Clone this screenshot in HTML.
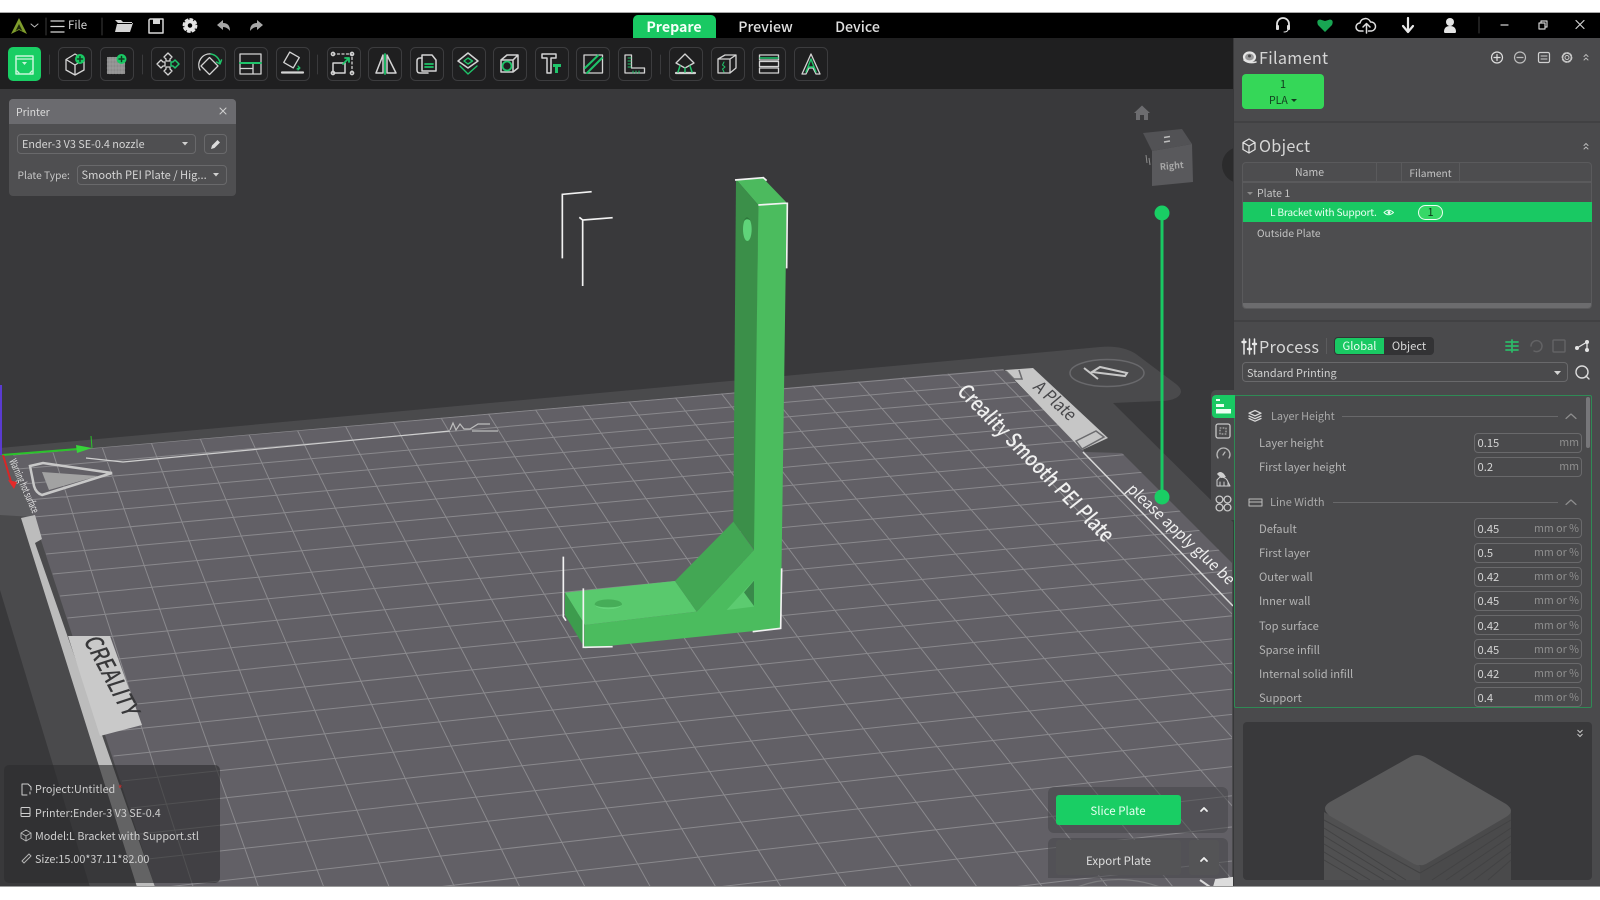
<!DOCTYPE html>
<html lang="en"><head><meta charset="utf-8"><title>Creality Print</title>
<style>
html,body{margin:0;padding:0;background:#fff;width:1600px;height:900px;overflow:hidden}
body{font-family:"Noto Sans CJK SC","Liberation Sans",sans-serif;position:relative}
.a{position:absolute}
.t{position:absolute;white-space:nowrap;line-height:20px;height:20px;font-size:11.2px;color:#b4b4b4}
.v{left:1477.5px;color:#d4d4d4}
.u{right:21px;color:#8e8e8e;font-size:10.7px}
.box{position:absolute;box-sizing:border-box;border:1px solid #69696b;border-radius:4px;height:20px}
.in{left:1474px;width:108px}
svg{position:absolute;left:0;top:0}
svg text{font-family:"Noto Sans CJK SC","Liberation Sans",sans-serif}
</style></head><body>

<div class="a" style="left:0;top:12px;width:1600px;height:875px;background:#38383a"></div>

<!-- 3D scene -->
<svg width="1600" height="900" viewBox="0 0 1600 900">
<defs><clipPath id="gc"><polygon points="13,455 1003,369 1085,452 1122,453 1232,563 1232,887 155,887"/></clipPath>
<clipPath id="sc"><rect x="0" y="13" width="1233" height="874"/></clipPath></defs>
<g clip-path="url(#sc)">
<rect x="0" y="13" width="1233" height="874" fill="#39393b"/>
<path d="M0 448 L1100 347 Q1122 345 1136 354 L1176 384 Q1186 392 1176 398 Q1170 401 1160 401 L1113 403 L1233 522 V887 H90 L0 590 Z" fill="#4a4a4c"/>
<path d="M0 455 H13 L33 517 L0 515 Z" fill="#5d5d60"/>
<polygon points="13,455 1003,369 1085,452 1122,453 1232,563 1232,887 155,887" fill="#626066"/>
<g id="grid" clip-path="url(#gc)" stroke="#b2b1b4" stroke-opacity=".5" stroke-width="1" fill="none"></g>
<!-- left strip -->
<polygon points="21,518 35,515 42,539 35,543 155,887 137,887" fill="#bcbcbc"/>
<!-- right white line -->
<line x1="1083" y1="452" x2="1233" y2="606" stroke="#d8d8d8" stroke-width="1.5"/>
<!-- top thin line -->
<path d="M86 458 L123 462 L450 431" fill="none" stroke="#cfcfcf" stroke-width="1.2"/>
<path d="M450 430 l3 -7 l3 7 l4 -6 l4 5 h6 l8 -5 h12 M472 431 h26" fill="none" stroke="#bdbdbd" stroke-width="1.2"/>
<!-- hot surface icon -->
<path d="M30 466 L43 463 L112 473 L42 495 Q36 493 34 486 Z" fill="none" stroke="#c8c8c8" stroke-width="2.5"/>
<path d="M42 472 L98 476 L49 490 Z" fill="#a2a2a2"/>
<text transform="translate(9,461) rotate(66)" font-size="10.5" fill="#e6e6e6" textLength="58" lengthAdjust="spacingAndGlyphs">Warning hot surface</text>
<!-- CREALITY -->
<polygon points="68,636 110,636 142,725 100,736" fill="#c9c9c9"/>
<text transform="translate(83,640) rotate(62) skewX(-10)" font-size="24" fill="#38383a" font-weight="500" textLength="88" lengthAdjust="spacingAndGlyphs">CREALITY</text>
<!-- A Plate -->
<polygon points="1005,370 1033,368 1108,438 1082,450" fill="#c6c6c6"/>
<path d="M1006 371 l8 8 h8 l-3 -9 M1082 449 l-6 -8 l20 -10 l8 6 z" fill="none" stroke="#6b6b6e" stroke-width="1.5"/>
<text transform="translate(1032,388) rotate(42) skewX(-8)" font-size="17" fill="#47474a" textLength="50" lengthAdjust="spacingAndGlyphs">A Plate</text>
<text transform="translate(956,392) rotate(45.5) skewX(-6)" font-size="21" font-weight="500" fill="#f0f0f0" textLength="212" lengthAdjust="spacingAndGlyphs">Creality Smooth PEI Plate</text>
<text transform="translate(1126,490) rotate(43) skewX(-6)" font-size="15.5" fill="#efefef" textLength="140" lengthAdjust="spacingAndGlyphs">please apply glue be</text>
<!-- logo ellipse -->
<ellipse cx="1107" cy="373" rx="37" ry="13.5" fill="none" stroke="#69696c" stroke-width="1.5"/>
<path d="M1084 368 L1098 379 M1092 372 L1100 367 L1127 373 L1125 376 Z" fill="none" stroke="#c8c8c8" stroke-width="2"/>
<!-- bottom right bits -->
<path d="M1077 887 Q1118 872 1160 887" fill="none" stroke="#7c7c7e" stroke-width="1.2"/>
<path d="M1200 880 L1210 887 M1214 887 L1216 880 L1232 878 V887 Z" fill="#dcdcdc" stroke="#dcdcdc" stroke-width="2"/>
<!-- axes -->
<line x1="1" y1="385" x2="1" y2="455" stroke="#5a3bd0" stroke-width="2"/>
<line x1="2" y1="455" x2="78" y2="449" stroke="#2bc32b" stroke-width="2"/>
<path d="M76 445 L92 448 L77 453 Z" fill="#38d43a"/>
<line x1="91" y1="436" x2="92" y2="448" stroke="#2bc32b" stroke-width="1"/>
<line x1="3" y1="455" x2="12" y2="485" stroke="#d92626" stroke-width="2"/>
<path d="M8 480 L17 482 L14 489 Z" fill="#e52a2a"/>
<!-- model -->
<g transform="translate(530,160) scale(.33333)">
<polygon points="618,58 700,55 770,128 685,135" fill="#4cba5e"/>
<polygon points="618,58 685,135 675,1172 610,1085" fill="#3b8f49"/>
<polygon points="685,135 770,128 752,1405 165,1465 165,1395 500,1355 672,1170" fill="#4bbc5e"/>
<polygon points="105,1298 435,1263 500,1355 165,1395" fill="#59c96d"/>
<polygon points="105,1298 165,1395 165,1465 105,1365" fill="#3d9c4d"/>
<polygon points="435,1263 610,1085 672,1170 500,1355" fill="#43a754"/>
<polygon points="590,1350 672,1260 672,1340" fill="#5ccb70"/>
<polygon points="642,1297 672,1262 672,1338" fill="#39894a"/>
<ellipse cx="652" cy="208" rx="13" ry="35" fill="#5fd47a"/>
<path d="M640 185 Q650 160 662 182 Q650 172 640 185Z" fill="#2f7a3d"/>
<ellipse cx="235" cy="1333" rx="41" ry="15" fill="#46ad58"/>
<path d="M194 1333 A41 15 0 0 0 276 1333 A41 9 0 0 1 194 1333Z" fill="#66d47b"/>
<g fill="none" stroke="#f2f2f2" stroke-width="5">
<path d="M97 295 V103 L185 95"/>
<path d="M158 378 V180 L248 173 M148 172 L158 180"/>
<path d="M615 60 L700 53 L710 62"/>
<path d="M685 135 L762 130 L772 130 L770 325"/>
<path d="M100 1190 V1370 L108 1382"/>
<path d="M160 1285 V1462 L248 1460"/>
<path d="M668 1415 L752 1405 L755 1225"/>
</g>
</g>
<!-- gizmo line -->
<line x1="1162" y1="213" x2="1162" y2="497" stroke="#19c963" stroke-width="3"/>
<circle cx="1162" cy="213" r="7.5" fill="#19ce64"/><circle cx="1162" cy="497" r="7.5" fill="#19ce64"/>
<!-- nav cube -->
<path d="M1134 113 L1142 105.5 L1150 113 H1148 V120 H1144 V115 H1140 V120 H1136 V113 Z" fill="#6c6c6f"/>
<polygon points="1143,133 1182,129 1192,144 1152,151" fill="#525255"/>
<polygon points="1152,151 1192,144 1193,182 1152,186" fill="#59595c"/>
<path d="M1164 137.5 l6 -1 M1170 141 l-6 1" stroke="#bdbdbd" stroke-width="1.5"/>
<path d="M1146 155 l1 8 M1149 158 l1 7" stroke="#8c8c8c" stroke-width="1"/>
<text x="1172" y="169" font-size="9" font-weight="700" fill="#a8a8a8" text-anchor="middle" transform="rotate(-5 1172 169)">Right</text>
<circle cx="1240" cy="165" r="18" fill="#2b2b2c"/>
</g>
</svg>

<!-- Title bar -->
<div class="a" style="left:0;top:12px;width:1600px;height:1px;background:#a8a8a8"></div>
<div class="a" style="left:0;top:13px;width:1600px;height:25px;background:#000"></div>
<!-- toolbar -->
<div class="a" style="left:0;top:38px;width:1233px;height:51px;background:#1f1f20"></div>
<div class="t" style="left:68px;top:15px;font-size:11.5px;color:#d4d4d4">File</div>
<div class="a" style="left:632.5px;top:15px;width:83px;height:23px;background:#19c963;border-radius:5px 5px 0 0"></div>
<div class="t" style="left:632.5px;top:17px;width:83px;text-align:center;font-size:14.2px;font-weight:700;color:#f4fff8">Prepare</div>
<div class="t" style="left:725.5px;top:17px;width:80px;text-align:center;font-size:14.2px;font-weight:500;color:#e0e0e0">Preview</div>
<div class="t" style="left:817.5px;top:17px;width:80px;text-align:center;font-size:14.2px;font-weight:500;color:#e0e0e0">Device</div>

<!-- Printer panel -->
<div class="a" style="left:9px;top:99px;width:227px;height:97px;background:#4f4f51;border-radius:4px;overflow:hidden"><div style="height:25px;background:#6b6b6f"></div></div>
<div class="t" style="left:16px;top:102.5px;font-size:10.5px;color:#dcdcdc">Printer</div>
<div class="box" style="left:17px;top:134px;width:179px"></div>
<div class="t" style="left:22px;top:134px;font-size:10.8px;color:#d4d4d4">Ender-3 V3 SE-0.4 nozzle</div>
<div class="box" style="left:204px;top:134px;width:23px"></div>
<div class="t" style="left:17.5px;top:165px;font-size:10.2px;color:#c8c8c8">Plate Type:</div>
<div class="box" style="left:77px;top:165px;width:150px"></div>
<div class="t" style="left:81.5px;top:165px;font-size:11.1px;color:#d4d4d4">Smooth PEI Plate / Hig...</div>

<!-- Sidebar -->
<div class="a" style="left:1234px;top:38px;width:366px;height:849px;background:#4a4a4c"></div>
<div class="a" style="left:1234px;top:121px;width:366px;height:2px;background:#414143"></div>
<div class="a" style="left:1234px;top:320px;width:366px;height:2px;background:#414143"></div>
<div class="t" style="left:1259px;top:47px;font-size:16.2px;letter-spacing:.3px;color:#d6d6d6">Filament</div>
<div class="a" style="left:1242px;top:74px;width:82px;height:35px;background:#35d758;border-radius:4px"></div>
<div class="t" style="left:1242px;top:74px;width:82px;text-align:center;font-size:11px;color:#123c1e">1</div>
<div class="t" style="left:1269px;top:91px;font-size:10.5px;color:#123c1e">PLA</div>
<div class="t" style="left:1259px;top:135px;font-size:16.2px;letter-spacing:.3px;color:#d6d6d6">Object</div>

<div class="a" style="left:1242px;top:162px;width:350px;height:147px;box-sizing:border-box;border:1px solid #5a5a5c;border-radius:4px;background:#4d4d4f"></div>
<div class="a" style="left:1243px;top:181px;width:348px;height:2px;background:#5a5a5c"></div>
<div class="a" style="left:1376px;top:163px;width:1px;height:18px;background:#5a5a5c"></div>
<div class="a" style="left:1401px;top:163px;width:1px;height:18px;background:#5a5a5c"></div>
<div class="a" style="left:1459px;top:163px;width:1px;height:18px;background:#5a5a5c"></div>
<div class="t" style="left:1243px;top:162.5px;width:133px;text-align:center;font-size:10.5px;color:#c4c4c4">Name</div>
<div class="t" style="left:1402px;top:162.5px;width:57px;text-align:center;font-size:10.2px;color:#c4c4c4">Filament</div>
<div class="t" style="left:1257px;top:183.5px;font-size:10.5px;color:#c4c4c4">Plate 1</div>
<div class="a" style="left:1243px;top:202px;width:349px;height:20px;background:#19c963"></div>
<div class="t" style="left:1270px;top:202px;font-size:10.2px;letter-spacing:-.2px;color:#e8fff1">L Bracket with Support.</div>
<div class="a" style="left:1418px;top:205px;width:25px;height:15px;box-sizing:border-box;border:1px solid #eafff2;border-radius:8px;background:#36d867"></div>
<div class="t" style="left:1418px;top:202px;width:25px;text-align:center;font-size:11px;color:#0f3a1c">1</div>
<div class="t" style="left:1257px;top:223px;font-size:10.2px;color:#c4c4c4">Outside Plate</div>
<div class="a" style="left:1243px;top:303px;width:348px;height:5px;background:#6c6c6e;border-radius:0 0 3px 3px"></div>

<div class="t" style="left:1259px;top:336px;font-size:16.2px;letter-spacing:.3px;color:#d6d6d6">Process</div>
<div class="a" style="left:1326px;top:338px;width:1px;height:16px;background:#5c5c5e"></div>
<div class="a" style="left:1334px;top:337px;width:100px;height:18px;background:#333335;border-radius:4px"></div>
<div class="a" style="left:1335px;top:338px;width:49px;height:16px;background:#19c963;border-radius:3px 0 0 3px"></div>
<div class="t" style="left:1335px;top:336px;width:49px;text-align:center;font-size:11.2px;color:#e8fff1">Global</div>
<div class="t" style="left:1384px;top:336px;width:50px;text-align:center;font-size:11.2px;color:#d8d8d8">Object</div>
<div class="box" style="left:1242px;top:362px;width:326px"></div>
<div class="t" style="left:1247px;top:363px;font-size:10.9px;color:#d0d0d0">Standard Printing</div>

<!-- left tabs -->
<div class="a" style="left:1211px;top:390px;width:23px;height:130px;background:#4a4a4c;border-radius:5px 0 0 0"></div>
<!-- settings panel -->
<div class="a" style="left:1234px;top:395px;width:358px;height:313px;box-sizing:border-box;border:1px solid #2f8a55;border-radius:2px;background:#4a4a4c"></div>
<div class="a" style="left:1212px;top:395px;width:23px;height:23px;background:#19c963;border-radius:4px 0 0 4px"></div>
<div class="a" style="left:1586px;top:397px;width:4px;height:51px;background:#77777a;border-radius:2px"></div>

<div class="t" style="left:1271px;top:406px;font-size:10.8px;color:#a8a8a8">Layer Height</div>
<div class="a" style="left:1342px;top:416px;width:216px;height:1px;background:#68686a"></div>
<div class="t" style="left:1270px;top:492px;font-size:11px;color:#a8a8a8">Line Width</div>
<div class="a" style="left:1333px;top:502px;width:225px;height:1px;background:#68686a"></div>

<div class="t" style="left:1259px;top:433px">Layer height</div>
<div class="box in" style="top:433px"></div><div class="t v" style="top:433px">0.15</div><div class="t u" style="top:433px">mm</div>
<div class="t" style="left:1259px;top:457px">First layer height</div>
<div class="box in" style="top:457px"></div><div class="t v" style="top:457px">0.2</div><div class="t u" style="top:457px">mm</div>

<div class="t" style="left:1259px;top:518.5px">Default</div>
<div class="box in" style="top:518px"></div><div class="t v" style="top:518.5px">0.45</div><div class="t u" style="top:518.5px">mm or %</div>
<div class="t" style="left:1259px;top:543px">First layer</div>
<div class="box in" style="top:543px"></div><div class="t v" style="top:543px">0.5</div><div class="t u" style="top:543px">mm or %</div>
<div class="t" style="left:1259px;top:567px">Outer wall</div>
<div class="box in" style="top:567px"></div><div class="t v" style="top:567px">0.42</div><div class="t u" style="top:567px">mm or %</div>
<div class="t" style="left:1259px;top:591px">Inner wall</div>
<div class="box in" style="top:591px"></div><div class="t v" style="top:591px">0.45</div><div class="t u" style="top:591px">mm or %</div>
<div class="t" style="left:1259px;top:615.5px">Top surface</div>
<div class="box in" style="top:615px"></div><div class="t v" style="top:615.5px">0.42</div><div class="t u" style="top:615.5px">mm or %</div>
<div class="t" style="left:1259px;top:639.5px">Sparse infill</div>
<div class="box in" style="top:639px"></div><div class="t v" style="top:639.5px">0.45</div><div class="t u" style="top:639.5px">mm or %</div>
<div class="t" style="left:1259px;top:663.5px">Internal solid infill</div>
<div class="box in" style="top:663px"></div><div class="t v" style="top:663.5px">0.42</div><div class="t u" style="top:663.5px">mm or %</div>
<div class="t" style="left:1259px;top:688px">Support</div>
<div class="box in" style="top:687px"></div><div class="t v" style="top:688px">0.4</div><div class="t u" style="top:688px">mm or %</div>

<!-- preview -->
<div class="a" style="left:1243px;top:722px;width:349px;height:158px;background:#39393b;border-radius:4px"></div>
<svg width="1600" height="900" viewBox="0 0 1600 900" style="pointer-events:none">
<polygon points="1324,812 1420,866 1420,880 1324,880" fill="#505051"/>
<polygon points="1420,866 1511,812 1511,880 1420,880" fill="#4a4a4b"/>
<g stroke="#424243" stroke-width="1"><path d="M1324 820L1420 873M1324 828L1406 880M1324 836L1396 880M1324 844L1384 880M1324 852L1370 880M1324 860L1358 880"/><path d="M1420 873L1511 820M1432 880L1511 828M1446 880L1511 836M1460 880L1511 844M1474 880L1511 852M1488 880L1511 860"/></g>
<path d="M1410 757 Q1417 753 1425 757 L1506 804 Q1516 811 1506 817 L1426 864 Q1420 867 1414 864 L1330 816 Q1320 808 1330 802 Z" fill="#5a5a5b"/>
<path d="M1577.5 730l2.5 2.5 2.5-2.5M1577.5 734l2.5 2.5 2.5-2.5" fill="none" stroke="#c8c8c8" stroke-width="1"/>
</svg>

<!-- slice -->
<div class="a" style="left:1048px;top:787px;width:180px;height:46px;background:rgba(70,70,72,.55);border-radius:6px"></div>
<div class="a" style="left:1048px;top:838px;width:180px;height:40px;background:rgba(70,70,72,.55);border-radius:6px 6px 0 0"></div>
<div class="a" style="left:1056px;top:795px;width:125px;height:30px;background:#19ce64;border-radius:3px"></div>
<div class="t" style="left:1056px;top:800.5px;width:124px;text-align:center;font-size:11.5px;color:#e6fff0">Slice Plate</div>
<div class="a" style="left:1056px;top:840px;width:125px;height:35px;background:#545456;border-radius:3px"></div>
<div class="a" style="left:1189px;top:850px;width:30px;height:25px;background:#545456;border-radius:0 0 3px 3px"></div>
<div class="a" style="left:1189px;top:840px;width:30px;height:12px;background:#545456;border-radius:3px 3px 0 0"></div>
<div class="t" style="left:1056.5px;top:850.5px;width:124px;text-align:center;font-size:11.5px;color:#dedede">Export Plate</div>

<!-- info box -->
<div class="a" style="left:4px;top:765px;width:216px;height:118px;background:rgba(45,45,47,.62);border-radius:5px"></div>
<div class="t" style="left:35px;top:779px;font-size:10.8px;color:#cfcfcf">Project:Untitled <span style="color:#c43030">*</span></div>
<div class="t" style="left:35px;top:802.5px;font-size:10.8px;color:#cfcfcf">Printer:Ender-3 V3 SE-0.4</div>
<div class="t" style="left:35px;top:825.5px;font-size:10.8px;color:#cfcfcf">Model:L Bracket with Support.stl</div>
<div class="t" style="left:35px;top:848.5px;font-size:10.8px;color:#cfcfcf">Size:15.00*37.11*82.00</div>

<!-- Icons overlay -->
<svg width="1600" height="900" viewBox="0 0 1600 900" fill="none" stroke-linecap="round" stroke-linejoin="round">
<!-- title left -->
<path d="M19 18 L11 34 L19 30 L27 34 Z" fill="#7f9d2c"/><path d="M19 24 L15.5 31 L19 29 L22.5 31 Z" fill="#1d2a0a"/>
<path d="M31 24l3.5 3 3.5-3" stroke="#bbb" stroke-width="1"/>
<path d="M46 18V35M102 18V35" stroke="#3c3c3c"/>
<path d="M51 21H64M51 26.5H64M51 32H64" stroke="#d6d6d6" stroke-width="1.3"/>
<path d="M115 20h6l2 2h9v2h-15l-2 8z M115 20v12h15l3-9h-15" fill="#d4d4d4"/>
<path d="M150 19h13v14h-14V20z" stroke="#d8d8d8" stroke-width="1.5"/><rect x="153" y="19" width="7" height="5" fill="#d8d8d8"/>
<circle cx="190" cy="25.5" r="4" stroke="#e4e4e4" stroke-width="3.5"/><circle cx="190" cy="25.5" r="6.5" stroke="#e4e4e4" stroke-width="1.8" stroke-dasharray="2.5 2.6"/>
<path d="M217 25l6-5v3q7 0 7 8q-3-4-7-4v3z" fill="#a8a8a8"/>
<path d="M263 25l-6-5v3q-7 0-7 8q3-4 7-4v3z" fill="#a8a8a8"/>
<!-- title right -->
<path d="M1277 27v-3a6 6 0 0 1 12 0v3" stroke="#e0e0e0" stroke-width="1.8"/><rect x="1276" y="25" width="3" height="5" rx="1" fill="#e0e0e0"/><rect x="1287" y="25" width="3" height="5" rx="1" fill="#e0e0e0"/><path d="M1288 30q-1 2-4 2" stroke="#e0e0e0"/>
<path d="M1325 32 L1318 25 Q1316 20 1320 19.5 L1325 21 L1330 19.5 Q1334 20 1332 25 Z" fill="#18a552"/>
<path d="M1363 31h-3a4 4 0 0 1 0-8a5.5 5.5 0 0 1 10.5-1a4.5 4.5 0 0 1 1 9h-3M1366.5 33v-9M1363 27l3.5-3.5 3.5 3.5" stroke="#dedede" stroke-width="1.5"/>
<path d="M1408 18v13M1403 26l5 6 5-6" stroke="#e8e8e8" stroke-width="2.2"/>
<circle cx="1450" cy="22" r="4" fill="#e4e4e4"/><path d="M1444 32q0-6 6-6t6 6q0 1-2 1h-8q-2 0-2-1z" fill="#e4e4e4"/>
<path d="M1479 17V33" stroke="#3e3e3e"/>
<path d="M1501 25h7" stroke="#d0d0d0" stroke-width="1.2"/>
<path d="M1539 23h6v6h-6zM1541 23v-2h6v6h-2" stroke="#d0d0d0" stroke-width="1.2"/>
<path d="M1576 20.5l8 8M1584 20.5l-8 8" stroke="#d0d0d0" stroke-width="1.2"/>
<!-- toolbar -->
<rect x="8" y="47" width="33" height="34" rx="5" fill="#19ce64"/>
<g stroke="#3c3c3e" fill="#1f1f20">
<rect x="58.5" y="47.5" width="33" height="33" rx="5"/><rect x="100.5" y="47.5" width="33" height="33" rx="5"/>
<rect x="151.5" y="47.5" width="33" height="33" rx="5"/><rect x="192.5" y="47.5" width="33" height="33" rx="5"/>
<rect x="234.5" y="47.5" width="33" height="33" rx="5"/><rect x="276.5" y="47.5" width="33" height="33" rx="5"/>
<rect x="327.5" y="47.5" width="33" height="33" rx="5"/><rect x="368.5" y="47.5" width="33" height="33" rx="5"/>
<rect x="410.5" y="47.5" width="33" height="33" rx="5"/><rect x="452.5" y="47.5" width="33" height="33" rx="5"/>
<rect x="493.5" y="47.5" width="33" height="33" rx="5"/><rect x="535.5" y="47.5" width="33" height="33" rx="5"/>
<rect x="576.5" y="47.5" width="33" height="33" rx="5"/><rect x="618.5" y="47.5" width="33" height="33" rx="5"/>
<rect x="669.5" y="47.5" width="33" height="33" rx="5"/><rect x="711.5" y="47.5" width="33" height="33" rx="5"/>
<rect x="752.5" y="47.5" width="33" height="33" rx="5"/><rect x="794.5" y="47.5" width="33" height="33" rx="5"/>
</g>
<path d="M49.5 55V74M142.5 55V74M317.5 55V74M660.5 55V74" stroke="#3a3a3c"/>
<g stroke="#d4d4d4" stroke-width="1.3">
<rect x="16" y="56" width="17" height="18" stroke="#c8f5da" stroke-width="1.5"/><path d="M16 59H33" stroke="#c8f5da"/><path d="M22 62h5l-2.5 3z" fill="#c8f5da" stroke="none"/><path d="M17 71l2 2M32 71l-2 2" stroke="#c8f5da"/>
<path d="M75 54L84 59.5V70L75 75L66 70V59.5ZM66 59.5L75 65L84 59.5M75 65V75"/>
<path d="M107 57h18v17h-18z" fill="#8b8b8b" stroke="none"/><path d="M110 57v17M113 57v17M116 57v17M119 57v17M122 57v17M107 60h18M107 64h18M107 68h18M107 72h18" stroke="#a6a6a6" stroke-width=".6"/>
<path d="M168 53l4 4-2 2v2h-4v-2l-2-2zM168 75l4-4-2-2v-2h-4v2l-2 2zM157 64l4-4 2 2h2v4h-2l-2 2z"/>
<path d="M211 54A11 11 0 0 0 200 70" stroke="#d4d4d4"/><rect x="203.5" y="60" width="12" height="12" transform="rotate(45 209.5 66)"/>
<path d="M240 54h21v20h-21zM240 68.5h13M253 63v11"/>
<rect x="286" y="54" width="11" height="12" transform="rotate(30 291.5 60)"/><path d="M282 72.5h21" stroke-width="2.2"/>
<path d="M333 54h19v19" stroke-dasharray="2 2.5"/><rect x="333" y="63" width="12" height="10" stroke-width="1.5"/><circle cx="333" cy="54" r="1.7"/><circle cx="352" cy="54" r="1.7"/><circle cx="333" cy="73" r="1.7"/><circle cx="352" cy="73" r="1.7"/>
<path d="M383 55L376 73H383ZM387 55L396 73H387Z" stroke-width="1.5"/>
<path d="M422 55h10l4 5v11h-14z" stroke-width="1.5"/><path d="M422 58h-2q-3 0-3 3v9q0 3 3 3h8" stroke-width="1.5"/>
<path d="M468 53L478 61L468 68L458 61Z" stroke-width="1.5"/>
<path d="M501 60h12v12h-12zM501 60l6-5h11v13l-5 4M513 60l5-5" stroke-width="1.5"/>
<path d="M542 54h14v4h-5v15h-4V58h-5z" stroke-width="1.5"/>
<rect x="584" y="55" width="18.5" height="18"/>
<path d="M625 55h6.5v13h13v5H625z" stroke-width="1.3"/>
<path d="M685 54l9 9-9 5-9-5z"/><path d="M676 73h19" stroke-width="2.2" stroke="#cfcfcf"/>
<path d="M718 59h12v14h-12zM718 59l7-4h11v13l-6 5M730 59l6-4" stroke-width="1.3"/>
<rect x="759.5" y="55" width="19" height="5"/><rect x="759.5" y="61.5" width="19" height="5"/><rect x="759.5" y="68" width="19" height="5"/>
<path d="M811 54L802 74H806L809 68H813L816 74H820Z" stroke="#d4d4d4"/>
</g>
<g stroke="#1fc46a" stroke-width="1.5">
<circle cx="80" cy="59" r="5" fill="#19c963" stroke="none"/><path d="M80 56.5v5M77.5 59h5" stroke="#103c22"/>
<circle cx="121.5" cy="59" r="5" fill="#19c963" stroke="none"/><path d="M121.5 56.5v5M119 59h5" stroke="#103c22"/>
<path d="M179 64l-4-4-2 2h-2v4h2l2 2z"/>
<path d="M211 54a11 11 0 0 1 9 9M216.5 62l3.5 2 1.5-4"/>
<path d="M240 63H261" stroke-width="2"/>
<path d="M297 69l2.5-1.5M298 66l2 2-2 2" stroke-width="1.2"/>
<path d="M343 64l6-6M345 58h4v4" stroke-width="1.8"/>
<path d="M385 54V74" stroke-width="1.8"/>
<path d="M425 64h8M425 67h8" stroke-width="1.7"/>
<path d="M460 66L468 74L477 66M464 61l4-3 4.5 3-4.5 3z" stroke-width="1.4"/>
<circle cx="507" cy="66" r="4.5" stroke-width="1.8"/>
<path d="M553 64h8v3h-3v6h-3v-6h-2z" fill="#1fc46a" stroke="none"/>
<path d="M585 68L598 55.5M587 73L602 58" stroke-width="2"/>
<path d="M628 58h3M628 61h3M628 64h3M628 67h3M633 71v2M636 71v2M639 71v2" stroke-width="1"/>
<path d="M680 66l-2 6M690 66l2 6M685 68v4" stroke-width="1.5"/>
<path d="M724 62l-1.5 3 2.5 2-2.5 2 1.5 3" stroke-width="1"/>
<path d="M760 58H778" stroke-width="1.5"/>
<path d="M811 59L806 72M811 59L816 72M808 67h6" stroke-width="1.4"/>
</g>
<!-- printer panel icons -->
<path d="M220 108l6 6M226 108l-6 6" stroke="#cfcfcf"/>
<path d="M182 142h6l-3 3.5z" fill="#d0d0d0"/>
<path d="M211 149l1-3.5 5.5-5.5 2.5 2.5-5.5 5.5z" fill="#dcdcdc"/>
<path d="M213 173h6l-3 3.5z" fill="#d0d0d0"/>
<!-- sidebar icons -->
<ellipse cx="1249.5" cy="57" rx="5.5" ry="4.5" stroke="#e4e4e4" stroke-width="2.2" fill="#e4e4e4" fill-opacity=".5"/><circle cx="1249.5" cy="56" r="1.5" fill="#4a4a4c"/><path d="M1244 60q5 4 12 2" stroke="#e4e4e4" stroke-width="1.5"/>
<circle cx="1497" cy="57.5" r="5.5" stroke="#dedede" stroke-width="1.2"/><path d="M1497 54.5v6M1494 57.5h6" stroke="#dedede" stroke-width="1.2"/>
<circle cx="1520" cy="57.5" r="5.5" stroke="#bdbdbd" stroke-width="1.2"/><path d="M1517 57.5h6" stroke="#bdbdbd" stroke-width="1.2"/>
<rect x="1538.5" y="52.5" width="11" height="10" rx="1.5" stroke="#d0d0d0" stroke-width="1.2"/><path d="M1541 56h6M1547 59h-6" stroke="#d0d0d0"/>
<circle cx="1567" cy="57.5" r="2" stroke="#c8c8c8"/><circle cx="1567" cy="57.5" r="4.5" stroke="#c8c8c8" stroke-width="1.8" stroke-dasharray="2 1.5"/>
<path d="M1584 56.5l2-2 2 2M1584 60l2-2 2 2" stroke="#b8b8b8"/>
<path d="M1584 145.5l2-2 2 2M1584 149l2-2 2 2" stroke="#b8b8b8"/>
<path d="M1249 139l6 3.5v7l-6 3.5-6-3.5v-7zM1243 142.5l6 3.5 6-3.5M1249 146v7" stroke="#e0e0e0" stroke-width="1.3"/>
<path d="M1247 192h6l-3 3z" fill="#8c8c8c"/>
<path d="M1384 212.5q4.5-4.5 9.5 0q-5 4.5-9.5 0z" stroke="#eafff2"/><circle cx="1389" cy="212.5" r="1.5" fill="#eafff2"/>
<path d="M1244 339v15M1249.5 339v15M1254.5 339v15" stroke="#e8e8e8" stroke-width="1.5"/><path d="M1242.5 342h3M1248 349h3M1253 344h3" stroke="#e8e8e8" stroke-width="2.4"/>
<path d="M1506 342h12M1506 346h12M1506 350h12M1512 340v12" stroke="#2db868" stroke-width="1.8"/>
<path d="M1531 346a5.5 5.5 0 1 1 3 5" stroke="#636365" stroke-width="1.5"/>
<rect x="1553" y="340" width="12" height="12" rx="1" stroke="#636365" stroke-width="1.5"/>
<circle cx="1577" cy="348" r="2" fill="#e4e4e4"/><circle cx="1587" cy="342" r="2" fill="#e4e4e4"/><circle cx="1587" cy="350" r="2" fill="#e4e4e4"/><path d="M1577 348l10-6M1587 342v8" stroke="#e4e4e4" stroke-width="1.3"/>
<path d="M1554 371h7l-3.5 4z" fill="#d4d4d4"/>
<circle cx="1582" cy="372" r="6" stroke="#dcdcdc" stroke-width="1.4"/><path d="M1586 376l3 3" stroke="#dcdcdc" stroke-width="1.4"/>
<rect x="1216" y="399" width="4" height="2" fill="#eafff2"/><rect x="1216" y="404" width="8" height="3" fill="#eafff2"/><rect x="1216" y="409" width="15" height="4.5" fill="#eafff2"/>
<rect x="1216" y="424" width="14" height="14" rx="2" stroke="#c8c8c8" stroke-width="1.3"/><path d="M1220 428h6v6h-6z" stroke="#c8c8c8" stroke-dasharray="1 2"/>
<path d="M1218 458a6.5 6.5 0 1 1 11 0M1223 455l2-3" stroke="#b8b8b8" stroke-width="1.3"/>
<path d="M1217 486v-6l3-3q5 0 7 3l3 6zM1220 486v-4M1224 486v-4M1228 486v-4" stroke="#cfcfcf"/><path d="M1217 474q3-4 7 0l2 3-5 1z" fill="#cfcfcf"/>
<g stroke="#c8c8c8" stroke-width="1.3"><circle cx="1219.5" cy="499.5" r="3.4"/><circle cx="1227.5" cy="499.5" r="3.4"/><circle cx="1219.5" cy="507.5" r="3.4"/><circle cx="1227.5" cy="507.5" r="3.4"/></g>
<path d="M1255 410.5l6 2.7-6 2.7-6-2.7zM1249 416l6 2.7 6-2.7M1249 418.5l6 2.7 6-2.7" stroke="#d8d8d8" stroke-width="1.3"/>
<path d="M1566 418.5l5-4.5 5 4.5M1566 504.5l5-4.5 5 4.5" stroke="#8e8e8e" stroke-width="1.2"/>
<path d="M1249 499h13v7h-13zM1249 502h13" stroke="#bdbdbd"/>
<path d="M1201 811l3-3 3 3M1201 861l3-3 3 3" stroke="#f0f0f0" stroke-width="1.8"/>
<path d="M22 784h6l3 3v3M22 784v11h5M30 792v2" stroke="#cfcfcf"/>
<rect x="21" y="807.5" width="9" height="9" rx="1" stroke="#cfcfcf"/><path d="M21 813.5h9" stroke="#cfcfcf"/>
<path d="M26 830l5 3v5l-5 3-5-3v-5zM21 833l5 3 5-3M26 836v5" stroke="#b4b4b4"/>
<path d="M22 861l7-7 2 2-7 7z" stroke="#b4b4b4"/>
<path d="M1291 99h6l-3 3z" fill="#123c1e"/>
</svg>

<!-- bottom white -->
<div class="a" style="left:0;top:886px;width:1600px;height:1px;background:#9a9a9a"></div>
<div class="a" style="left:0;top:887px;width:1600px;height:13px;background:#fff"></div>

<script>
(function(){var g=document.getElementById('grid'),d='';
var V1=[-448,-1100],V2=[16700,-980];
var ys=[455,469,484,500,517,535,554,574,596,618,640,662.5,685,708,732,756,781,808,834,859,888,918,950,985,1020,1060];
ys.forEach(function(y){var x=13+.334*(y-455),m=(V2[1]-y)/(V2[0]-x),xs=x,ysv=y;
if(y>887){xs=x+(887-y)/m;ysv=887;}
if(xs>1300)return;
d+='M'+xs.toFixed(1)+' '+ysv.toFixed(1)+'L1300 '+(y+m*(1300-x)).toFixed(1);});
for(var j=-12;j<=15;j++){var ax=456.7+57.2*j,r=(ax-V1[0])/(640-V1[1]);
var yt=350,xt=ax+r*(yt-640),ye=887,xe=ax+r*(ye-640);
if(xe>1300){xe=1300;ye=640+(xe-ax)/r;}
d+='M'+xt.toFixed(1)+' '+yt+'L'+xe.toFixed(1)+' '+ye.toFixed(1);}
var p=document.createElementNS('http://www.w3.org/2000/svg','path');p.setAttribute('d',d);g.appendChild(p);})();
</script>
</body></html>
